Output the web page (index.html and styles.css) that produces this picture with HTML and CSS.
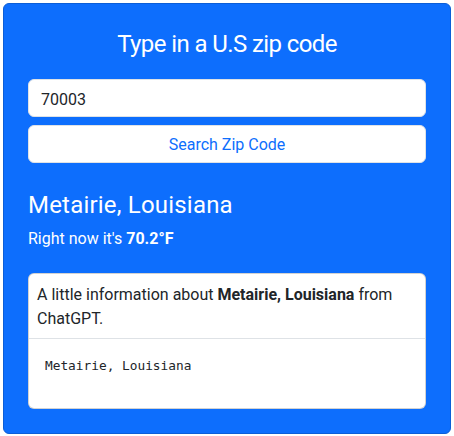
FILE: index.html
```html
<!DOCTYPE html>
<html lang="en">
<head>
<meta charset="utf-8">
<title>Zip Weather</title>
<link rel="stylesheet" href="styles.css">
</head>
<body>
<div class="panel">
  <h3 class="title">Type in a U.S zip code</h3>
  <form class="zip-form">
    <input class="zip-input" type="text" value="70003">
    <button class="zip-btn" type="button">Search Zip Code</button>
  </form>
  <h4 class="city">Metairie, Louisiana</h4>
  <p class="temp">Right now it's <strong>70.2°F</strong></p>
  <div class="info-card">
    <div class="info-header">A little information about <strong>Metairie, Louisiana</strong> from ChatGPT.</div>
    <div class="info-body"><pre class="info-pre">Metairie, Louisiana</pre></div>
  </div>
</div>
</body>
</html>
```
FILE: styles.css
```css
* { box-sizing: border-box; }
html, body { margin: 0; }
body {
  padding: 3px;
  font-family: "Roboto", "Open Sans", sans-serif;
  font-size: 16px;
  line-height: 24px;
  color: #212529;
  background: #fff;
}
.panel {
  width: 448px;
  height: 431px;
  background: #0d6efd;
  border: 1px solid #0b5ed7;
  border-radius: 6px;
  padding: 24px;
  color: #fff;
}
.title {
  margin: 0 0 20px;
  padding-top: 2px;
  font-size: 24px;
  line-height: 29px;
  font-weight: 400;
  letter-spacing: -0.6px;
  text-align: center;
}
.zip-form {
  display: flex;
  flex-direction: column;
  gap: 8px;
  margin: 0;
}
.zip-input, .zip-btn {
  height: 38px;
  width: 100%;
  border: 1px solid #dee2e6;
  border-radius: 6px;
  background: #fff;
  font-family: inherit;
  font-size: 16px;
  line-height: 24px;
  padding: 7px 12px 5px;
}
.zip-input { color: #212529; }
.zip-btn { color: #0d6efd; text-align: center; }
.city {
  margin: 28px 0 7px;
  font-size: 24px;
  line-height: 29px;
  font-weight: 400;
  letter-spacing: 0.2px;
}
.temp {
  margin: 0 0 22px;
}
.temp strong { font-weight: 700; }
.info-card {
  background: #fff;
  color: #212529;
  border: 1px solid rgba(0,0,0,.175);
  border-radius: 6px;
}
.info-header {
  padding: 9px 8px 7px;
  border-bottom: 1px solid #dee2e6;
}
.info-body {
  padding: 16px;
}
.info-pre {
  margin: 0 0 16px;
  font-family: "DejaVu Sans Mono", "Liberation Mono", monospace;
  font-size: 12.8px;
  line-height: 21px;
  color: #212529;
}
```
